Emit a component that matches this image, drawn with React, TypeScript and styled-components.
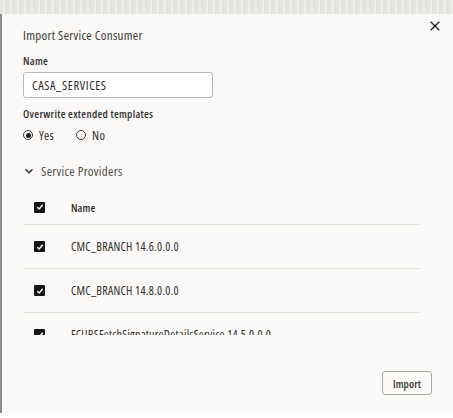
import React from "react";
import styled, { createGlobalStyle } from "styled-components";

const Global = createGlobalStyle`
  html, body { margin: 0; padding: 0; background: #ffffff; }
  body {
    font-family: "Open Sans", "Noto Sans", sans-serif;
    font-stretch: 75%;
    letter-spacing: 0.3px;
    color: #2b2a28;
  }
  button { font-stretch: 75%; }
  * { box-sizing: border-box; }
`;

const Backdrop = styled.div`
  height: 14px;
  background: repeating-linear-gradient(90deg, #e6e4e1 0 3px, #eeedea 3px 5px, #e3e1de 5px 7px);
`;

const Dialog = styled.div`
  height: 399px;
  background: #faf9f7;
  border-left: 2px solid #8d8c8a;
  display: flex;
  flex-direction: column;
`;

const Header = styled.div`
  display: flex;
  justify-content: space-between;
  align-items: flex-start;
  padding: 4px 10px 0 21px;
`;

const Title = styled.h1`
  margin: 9px 0 0;
  font-size: 13px;
  font-weight: 400;
  color: #3a3936;
  line-height: 16px;
`;

const Close = styled.button`
  border: none;
  background: none;
  padding: 0;
  width: 16px;
  height: 16px;
  display: flex;
  align-items: center;
  justify-content: center;
  cursor: pointer;
`;

const Body = styled.div`
  padding: 0 33px 0 21px;
  display: flex;
  flex-direction: column;
`;

const Label = styled.div<{ $mt: number }>`
  font-size: 11px;
  font-weight: 600;
  color: #34332f;
  line-height: 14px;
  margin-top: ${(p) => p.$mt}px;
`;

const Input = styled.div`
  width: 190px;
  height: 26px;
  margin-top: 4px;
  border: 1px solid #b9b8b5;
  border-radius: 3px;
  background: #ffffff;
  display: flex;
  align-items: center;
  padding-left: 8px;
  font-size: 12.5px;
  letter-spacing: 0.6px;
  color: #2b2a28;
`;

const RadioGroup = styled.div`
  display: flex;
  gap: 22px;
  margin-top: 6px;
  height: 16px;
  align-items: center;
`;

const RadioItem = styled.label`
  display: flex;
  align-items: center;
  gap: 6px;
  font-size: 12.5px;
  color: #2b2a28;
`;

const RadioCircle = styled.span<{ $on?: boolean }>`
  width: 10px;
  height: 10px;
  border-radius: 50%;
  border: 1px solid #3b3a38;
  display: flex;
  align-items: center;
  justify-content: center;
  &::after {
    content: "";
    width: 5px;
    height: 5px;
    border-radius: 50%;
    background: ${(p) => (p.$on ? "#1f1e1c" : "transparent")};
  }
`;

const Section = styled.div`
  display: flex;
  align-items: center;
  gap: 7px;
  margin-top: 20px;
  height: 16px;
  padding-left: 1px;
  font-size: 13px;
  color: #4f4e4b;
`;

const Scroller = styled.div`
  margin-top: 11px;
  height: 145px;
  overflow: hidden;
`;

const Row = styled.div<{ $head?: boolean }>`
  display: flex;
  align-items: center;
  height: ${(p) => (p.$head ? 35 : 44)}px;
  border-bottom: 1px solid #e3e1de;
  font-size: ${(p) => (p.$head ? 11 : 12)}px;
  font-weight: ${(p) => (p.$head ? 600 : 400)};
  letter-spacing: ${(p) => (p.$head ? 0.1 : 0.25)}px;
  color: #2f2e2b;
  flex-shrink: 0;
`;

const CheckCell = styled.div`
  width: 48px;
  padding-left: 11px;
  display: flex;
  align-items: center;
`;

const Box = styled.span`
  width: 11px;
  height: 11px;
  background: #161513;
  border-radius: 1px;
  display: flex;
  align-items: center;
  justify-content: center;
`;

const Footer = styled.div`
  margin-top: auto;
  display: flex;
  justify-content: flex-end;
  padding: 0 21px 18px 0;
`;

const Button = styled.button`
  width: 50px;
  height: 24px;
  border: 1px solid #a9a8a5;
  border-radius: 3px;
  background: #fbfaf8;
  font-family: inherit;
  font-size: 11px;
  font-weight: 600;
  letter-spacing: 0.1px;
  color: #3a3936;
  padding: 0;
`;

const Check = () => (
  <Box>
    <svg width="8" height="8" viewBox="0 0 8 8">
      <path d="M1.3 4.2 L3.2 6 L6.7 1.8" fill="none" stroke="#fff" strokeWidth="1.4" />
    </svg>
  </Box>
);

const rows = [
  "CMC_BRANCH 14.6.0.0.0",
  "CMC_BRANCH 14.8.0.0.0",
  "FCUBSFetchSignatureDetailsService 14.5.0.0.0",
];

export default function App() {
  return (
    <>
      <Global />
      <Backdrop />
      <Dialog>
        <Header>
          <Title>Import Service Consumer</Title>
          <Close aria-label="Close">
            <svg width="10" height="10" viewBox="0 0 10 10">
              <path d="M0.7 0.7 L9.3 9.3 M9.3 0.7 L0.7 9.3" stroke="#1f1e1c" strokeWidth="1.3" />
            </svg>
          </Close>
        </Header>
        <Body>
          <Label $mt={11}>Name</Label>
          <Input>CASA_SERVICES</Input>
          <Label $mt={9}>Overwrite extended templates</Label>
          <RadioGroup>
            <RadioItem>
              <RadioCircle $on />
              Yes
            </RadioItem>
            <RadioItem>
              <RadioCircle />
              No
            </RadioItem>
          </RadioGroup>
          <Section>
            <svg width="10" height="10" viewBox="0 0 10 10">
              <path d="M1.5 3.2 L5 6.7 L8.5 3.2" fill="none" stroke="#2b2a28" strokeWidth="1.4" />
            </svg>
            Service Providers
          </Section>
          <Scroller>
            <Row $head>
              <CheckCell>
                <Check />
              </CheckCell>
              Name
            </Row>
            {rows.map((r) => (
              <Row key={r}>
                <CheckCell>
                  <Check />
                </CheckCell>
                {r}
              </Row>
            ))}
          </Scroller>
        </Body>
        <Footer>
          <Button>Import</Button>
        </Footer>
      </Dialog>
    </>
  );
}
